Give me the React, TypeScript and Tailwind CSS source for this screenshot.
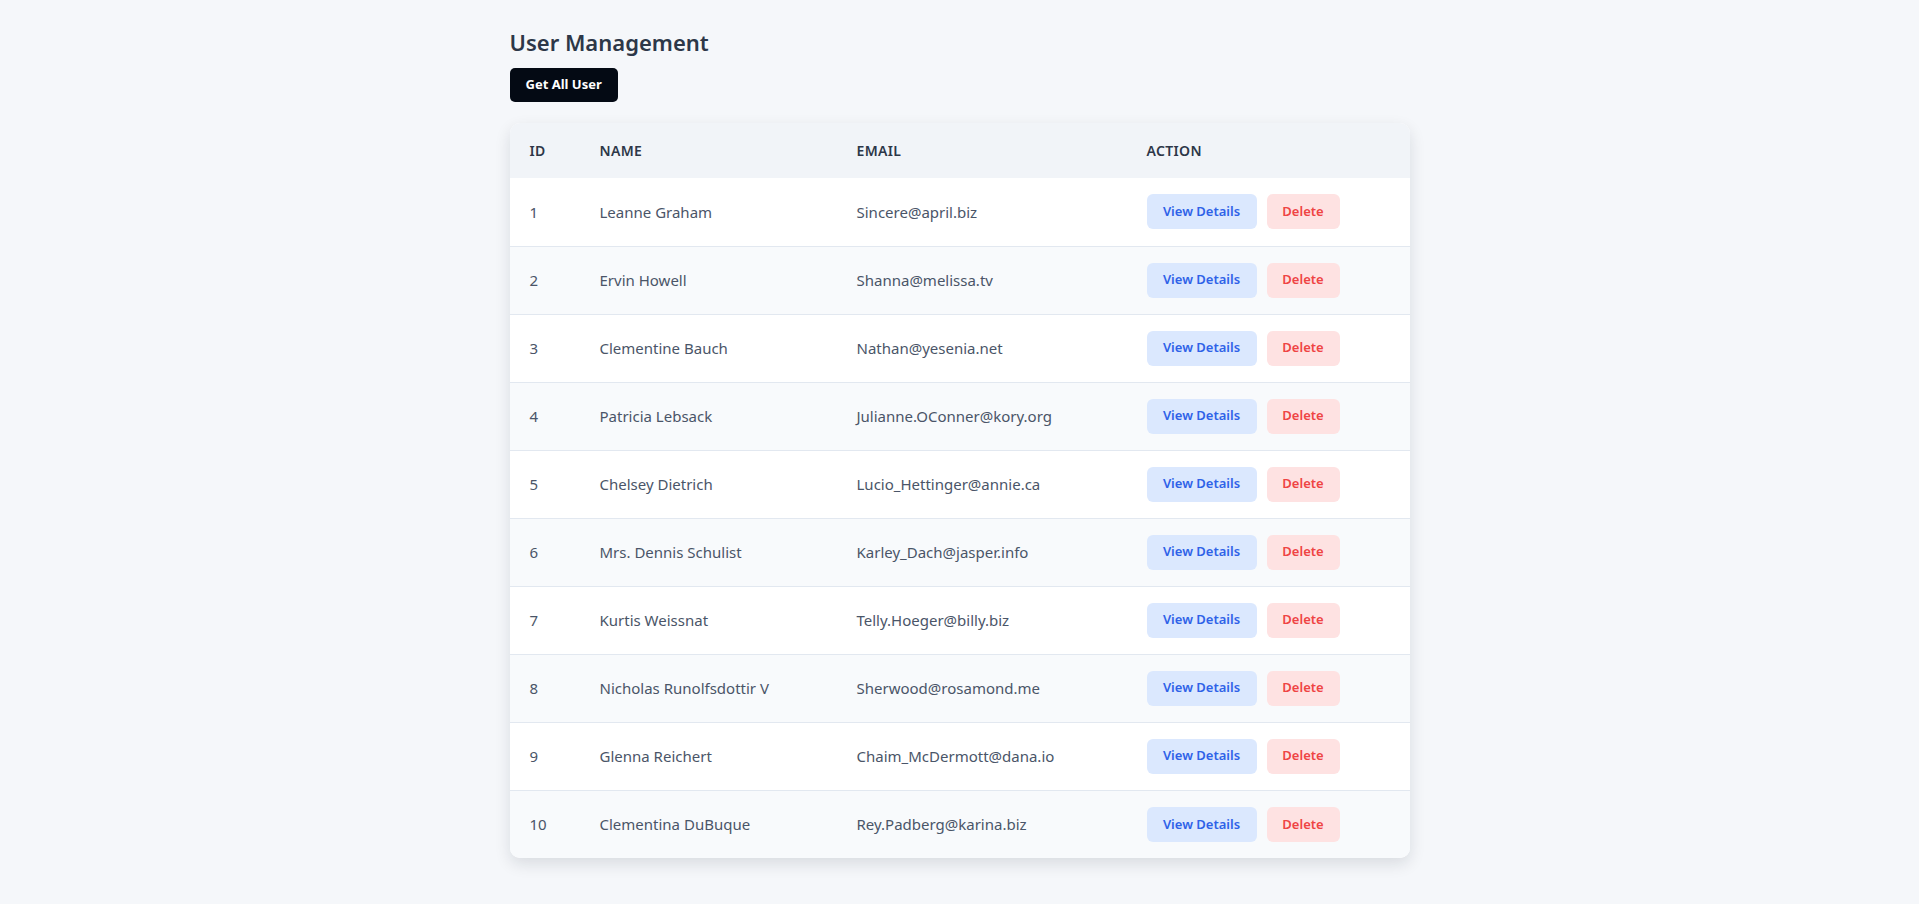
import React from 'react';

type User = { id: number; name: string; email: string };

const USERS: User[] = [
  { id: 1, name: 'Leanne Graham', email: 'Sincere@april.biz' },
  { id: 2, name: 'Ervin Howell', email: 'Shanna@melissa.tv' },
  { id: 3, name: 'Clementine Bauch', email: 'Nathan@yesenia.net' },
  { id: 4, name: 'Patricia Lebsack', email: 'Julianne.OConner@kory.org' },
  { id: 5, name: 'Chelsey Dietrich', email: 'Lucio_Hettinger@annie.ca' },
  { id: 6, name: 'Mrs. Dennis Schulist', email: 'Karley_Dach@jasper.info' },
  { id: 7, name: 'Kurtis Weissnat', email: 'Telly.Hoeger@billy.biz' },
  { id: 8, name: 'Nicholas Runolfsdottir V', email: 'Sherwood@rosamond.me' },
  { id: 9, name: 'Glenna Reichert', email: 'Chaim_McDermott@dana.io' },
  { id: 10, name: 'Clementina DuBuque', email: 'Rey.Padberg@karina.biz' },
];

const App: React.FC = () => {
  return (
    <div className="min-h-screen bg-[#f5f7fa] font-['Noto_Sans',sans-serif]">
      <div className="max-w-[900px] mx-auto pt-[26px] pb-10">
        {/* Header */}
        <h1 className="text-[22px] leading-8 font-semibold text-[#2d3748] mb-[10px]">User Management</h1>
        <button className="h-[34px] px-4 rounded-[5px] bg-[#040a14] text-white text-[13px] font-bold mb-[21px]">
          Get All User
        </button>

        {/* Users table */}
        <div className="bg-white rounded-[10px] overflow-hidden shadow-[0_6px_16px_rgba(15,23,42,0.12)]">
          <table className="w-full table-fixed border-collapse text-left">
            <thead>
              <tr className="h-[55px] bg-[#f1f4f8] text-[14px] uppercase text-[#2d3748] tracking-wide">
                <th className="w-[70px] pl-5 font-semibold">ID</th>
                <th className="w-[257px] pl-[20px] font-semibold">Name</th>
                <th className="w-[290px] pl-[20px] font-semibold">Email</th>
                <th className="pl-[20px] font-semibold">Action</th>
              </tr>
            </thead>
            <tbody>
              {USERS.map((u, i) => (
                <tr
                  key={u.id}
                  className={`h-[68px] text-[15px] text-[#4a5568] ${i > 0 ? 'border-t border-[#e2e8f0]' : ''} ${i % 2 === 1 ? 'bg-[#f8fafc]' : 'bg-white'}`}
                >
                  <td className="pl-5">{u.id}</td>
                  <td className="pl-[20px]">{u.name}</td>
                  <td className="pl-[20px]">{u.email}</td>
                  <td className="pl-[20px]">
                    <div className="flex items-center gap-[10px]">
                      <button className="h-[35px] w-[110px] rounded-[6px] bg-[#dbe8fe] text-[#2f62e8] text-[13px] font-semibold">
                        View Details
                      </button>
                      <button className="h-[35px] w-[73px] rounded-[6px] bg-[#fee2e2] text-[#ef4444] text-[13px] font-semibold">
                        Delete
                      </button>
                    </div>
                  </td>
                </tr>
              ))}
            </tbody>
          </table>
        </div>
      </div>
    </div>
  );
};

export default App;
